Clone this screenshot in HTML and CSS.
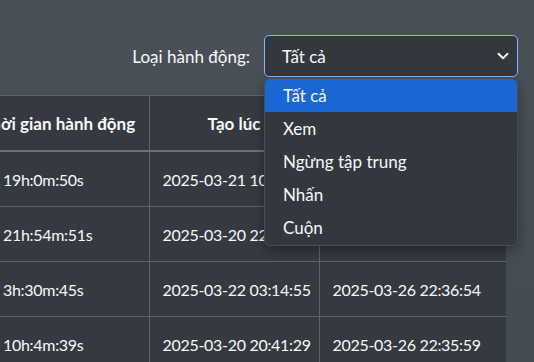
FILE: index.html
```html
<!DOCTYPE html>
<html lang="vi">
<head>
  <meta charset="UTF-8" />
  <meta name="viewport" content="width=device-width, initial-scale=1.0"/>
  <title>Lịch sử hành động</title>
  <link rel="stylesheet" href="styles.css">
</head>
<body>
  <div class="filter-bar">
    <label class="filter-label" for="actionType">Loại hành động:</label>
    <div class="select-wrap">
      <div class="select-box" id="actionType">
        <span>Tất cả</span>
        <svg class="chevron" width="12" height="12" viewBox="0 0 16 16"><path d="M2 5l6 6 6-6" fill="none" stroke="#fff" stroke-width="2.4" stroke-linecap="round" stroke-linejoin="round"/></svg>
      </div>
      <ul class="select-menu">
        <li class="active">Tất cả</li>
        <li>Xem</li>
        <li>Ngừng tập trung</li>
        <li>Nhấn</li>
        <li>Cuộn</li>
      </ul>
    </div>
  </div>
  <div class="table-wrap">
    <table class="log-table">
      <colgroup>
        <col class="col-time">
        <col class="col-created">
        <col class="col-updated">
      </colgroup>
      <thead>
        <tr>
          <th>Thời gian hành động</th>
          <th>Tạo lúc</th>
          <th>Cập nhật lúc</th>
        </tr>
      </thead>
      <tbody>
        <tr><td class="dur">19h:0m:50s</td><td>2025-03-21 10:12:08</td><td>2025-03-26 22:38:10</td></tr>
        <tr><td class="dur">21h:54m:51s</td><td>2025-03-20 22:05:33</td><td>2025-03-26 22:37:41</td></tr>
        <tr><td class="dur">3h:30m:45s</td><td>2025-03-22 03:14:55</td><td>2025-03-26 22:36:54</td></tr>
        <tr><td class="dur">10h:4m:39s</td><td>2025-03-20 20:41:29</td><td>2025-03-26 22:35:59</td></tr>
      </tbody>
    </table>
  </div>
</body>
</html>
```

FILE: styles.css
```css
body {
  margin: 0;
  background: linear-gradient(#4a5058, #454b52);
  font-family: Lato, "Noto Sans", sans-serif;
  color: #f8f9fa;
  height: 362px;
  overflow: hidden;
}
.filter-bar {
  display: flex;
  justify-content: flex-end;
  align-items: center;
  gap: 14px;
  padding: 35px 16px 0 0;
  height: 42px;
  position: relative;
  z-index: 2;
}
.filter-label {
  font-size: 17px;
}
.select-wrap {
  position: relative;
  width: 254px;
}
.select-box {
  box-sizing: border-box;
  height: 42px;
  display: flex;
  align-items: center;
  justify-content: space-between;
  padding: 0 8px 0 17px;
  background: #33373e;
  border: 1px solid #86b7fe;
  border-radius: 5px;
  font-size: 17px;
}
.select-menu {
  position: absolute;
  top: 43px;
  left: 0;
  right: 0;
  margin: 0;
  padding: 0 0 1px;
  list-style: none;
  background: #33373e;
  border: 1px solid #4a5058;
  border-radius: 6px;
  overflow: hidden;
  box-shadow: 0 4px 12px rgba(0, 0, 0, 0.35);
}
.select-menu li {
  height: 33px;
  line-height: 33px;
  padding-left: 18px;
  font-size: 17px;
}
.select-menu li.active {
  background: #1a66d2;
}
.table-wrap {
  margin-top: 18px;
  width: 506px;
  overflow: hidden;
}
.log-table {
  margin-left: -32px;
  width: 538px;
  table-layout: fixed;
  border-collapse: collapse;
  background: #343a40;
  font-size: 16px;
}
.col-time {
  width: 181px;
}
.col-created {
  width: 170px;
}
.col-updated {
  width: 187px;
}
.log-table th,
.log-table td {
  border: 1px solid #5d636b;
  height: 54px;
  padding: 0 13px;
  white-space: nowrap;
}
.log-table td {
  letter-spacing: -0.3px;
}
.log-table th {
  font-size: 17px;
  font-weight: 700;
  text-align: center;
  border-bottom: 2px solid #6c7178;
}
.log-table tr > :first-child {
  border-left: none;
}
.log-table td.dur {
  padding-left: 35px;
}
```
